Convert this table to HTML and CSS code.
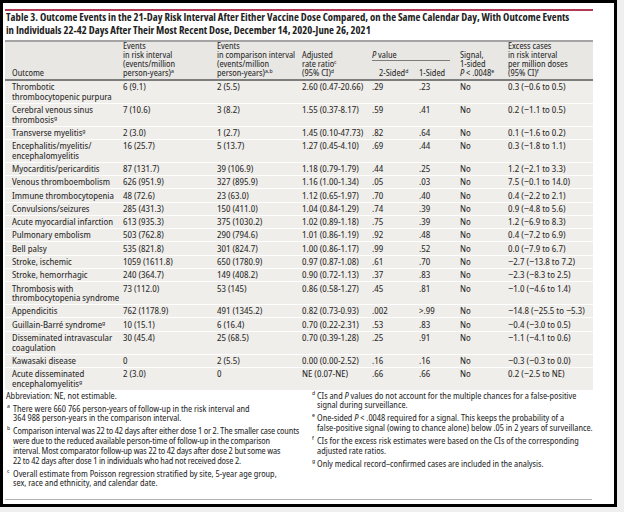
FILE: index.html
```html
<!DOCTYPE html>
<html lang="en">
<head>
<meta charset="utf-8">
<title>Table 3</title>
<link rel="stylesheet" href="styles.css">
</head>
<body>
<div class="frame">
  <div class="sheet">
    <div class="red-rule"></div>
    <h1 class="title">Table 3. Outcome Events in the 21-Day Risk Interval After Either Vaccine Dose Compared, on the Same Calendar Day, With Outcome Events<br>in Individuals 22-42 Days After Their Most Recent Dose, December 14, 2020-June 26, 2021</h1>
    <table class="data">
      <colgroup>
        <col class="c1"><col class="c2"><col class="c3"><col class="c4"><col class="c5"><col class="c6"><col class="c7"><col class="c8">
      </colgroup>
      <thead>
        <tr>
          <th rowspan="2">Outcome</th>
          <th rowspan="2">Events<br>in risk interval<br>(events/million<br>person-years)<sup>a</sup></th>
          <th rowspan="2">Events<br>in comparison interval<br>(events/million<br>person-years)<sup>a,b</sup></th>
          <th rowspan="2">Adjusted<br>rate ratio<sup>c</sup><br>(95% CI)<sup>d</sup></th>
          <th colspan="2" class="pv"><div class="pvl"><i>P</i> value</div></th>
          <th rowspan="2">Signal,<br>1-sided<br><i>P</i> &lt; .0048<sup>e</sup></th>
          <th rowspan="2">Excess cases<br>in risk interval<br>per million doses<br>(95% CI)<sup>f</sup></th>
        </tr>
        <tr>
          <th class="sub">2-Sided<sup>d</sup></th>
          <th class="sub">1-Sided</th>
        </tr>
      </thead>
      <tbody>
        <tr><td>Thrombotic<br>thrombocytopenic purpura</td><td>6 (9.1)</td><td>2 (5.5)</td><td>2.60 (0.47-20.66)</td><td>.29</td><td>.23</td><td>No</td><td>0.3 (−0.6 to 0.5)</td></tr>
        <tr><td>Cerebral venous sinus<br>thrombosis<sup>g</sup></td><td>7 (10.6)</td><td>3 (8.2)</td><td>1.55 (0.37-8.17)</td><td>.59</td><td>.41</td><td>No</td><td>0.2 (−1.1 to 0.5)</td></tr>
        <tr><td>Transverse myelitis<sup>g</sup></td><td>2 (3.0)</td><td>1 (2.7)</td><td>1.45 (0.10-47.73)</td><td>.82</td><td>.64</td><td>No</td><td>0.1 (−1.6 to 0.2)</td></tr>
        <tr><td>Encephalitis/myelitis/<br>encephalomyelitis</td><td>16 (25.7)</td><td>5 (13.7)</td><td>1.27 (0.45-4.10)</td><td>.69</td><td>.44</td><td>No</td><td>0.3 (−1.8 to 1.1)</td></tr>
        <tr><td>Myocarditis/pericarditis</td><td>87 (131.7)</td><td>39 (106.9)</td><td>1.18 (0.79-1.79)</td><td>.44</td><td>.25</td><td>No</td><td>1.2 (−2.1 to 3.3)</td></tr>
        <tr><td>Venous thromboembolism</td><td>626 (951.9)</td><td>327 (895.9)</td><td>1.16 (1.00-1.34)</td><td>.05</td><td>.03</td><td>No</td><td>7.5 (−0.1 to 14.0)</td></tr>
        <tr><td>Immune thrombocytopenia</td><td>48 (72.6)</td><td>23 (63.0)</td><td>1.12 (0.65-1.97)</td><td>.70</td><td>.40</td><td>No</td><td>0.4 (−2.2 to 2.1)</td></tr>
        <tr><td>Convulsions/seizures</td><td>285 (431.3)</td><td>150 (411.0)</td><td>1.04 (0.84-1.29)</td><td>.74</td><td>.39</td><td>No</td><td>0.9 (−4.8 to 5.6)</td></tr>
        <tr><td>Acute myocardial infarction</td><td>613 (935.3)</td><td>375 (1030.2)</td><td>1.02 (0.89-1.18)</td><td>.75</td><td>.39</td><td>No</td><td>1.2 (−6.9 to 8.3)</td></tr>
        <tr><td>Pulmonary embolism</td><td>503 (762.8)</td><td>290 (794.6)</td><td>1.01 (0.86-1.19)</td><td>.92</td><td>.48</td><td>No</td><td>0.4 (−7.2 to 6.9)</td></tr>
        <tr><td>Bell palsy</td><td>535 (821.8)</td><td>301 (824.7)</td><td>1.00 (0.86-1.17)</td><td>.99</td><td>.52</td><td>No</td><td>0.0 (−7.9 to 6.7)</td></tr>
        <tr><td>Stroke, ischemic</td><td>1059 (1611.8)</td><td>650 (1780.9)</td><td>0.97 (0.87-1.08)</td><td>.61</td><td>.70</td><td>No</td><td>−2.7 (−13.8 to 7.2)</td></tr>
        <tr><td>Stroke, hemorrhagic</td><td>240 (364.7)</td><td>149 (408.2)</td><td>0.90 (0.72-1.13)</td><td>.37</td><td>.83</td><td>No</td><td>−2.3 (−8.3 to 2.5)</td></tr>
        <tr><td>Thrombosis with<br>thrombocytopenia syndrome</td><td>73 (112.0)</td><td>53 (145)</td><td>0.86 (0.58-1.27)</td><td>.45</td><td>.81</td><td>No</td><td>−1.0 (−4.6 to 1.4)</td></tr>
        <tr><td>Appendicitis</td><td>762 (1178.9)</td><td>491 (1345.2)</td><td>0.82 (0.73-0.93)</td><td>.002</td><td>&gt;.99</td><td>No</td><td>−14.8 (−25.5 to −5.3)</td></tr>
        <tr><td>Guillain-Barré syndrome<sup>g</sup></td><td>10 (15.1)</td><td>6 (16.4)</td><td>0.70 (0.22-2.31)</td><td>.53</td><td>.83</td><td>No</td><td>−0.4 (−3.0 to 0.5)</td></tr>
        <tr><td>Disseminated intravascular<br>coagulation</td><td>30 (45.4)</td><td>25 (68.5)</td><td>0.70 (0.39-1.28)</td><td>.25</td><td>.91</td><td>No</td><td>−1.1 (−4.1 to 0.6)</td></tr>
        <tr><td>Kawasaki disease</td><td>0</td><td>2 (5.5)</td><td>0.00 (0.00-2.52)</td><td>.16</td><td>.16</td><td>No</td><td>−0.3 (−0.3 to 0.0)</td></tr>
        <tr><td>Acute disseminated<br>encephalomyelitis<sup>g</sup></td><td>2 (3.0)</td><td>0</td><td>NE (0.07-NE)</td><td>.66</td><td>.66</td><td>No</td><td>0.2 (−2.5 to NE)</td></tr>
      </tbody>
    </table>
    <div class="notes">
      <div class="col col-left">
        <p class="note plain">Abbreviation: NE, not estimable.</p>
        <p class="note"><sup class="m">a</sup><span>There were 660 766 person-years of follow-up in the risk interval and<br>364 988 person-years in the comparison interval.</span></p>
        <p class="note"><sup class="m">b</sup><span class="tight">Comparison interval was 22 to 42 days after either dose 1 or 2. The smaller case counts<br>were due to the reduced available person-time of follow-up in the comparison<br>interval. Most comparator follow-up was 22 to 42 days after dose 2 but some was<br>22 to 42 days after dose 1 in individuals who had not received dose 2.</span></p>
        <p class="note"><sup class="m">c</sup><span>Overall estimate from Poisson regression stratified by site, 5-year age group,<br>sex, race and ethnicity, and calendar date.</span></p>
      </div>
      <div class="col col-right">
        <p class="note"><sup class="m">d</sup><span>CIs and <i>P</i> values do not account for the multiple chances for a false-positive<br>signal during surveillance.</span></p>
        <p class="note"><sup class="m">e</sup><span>One-sided <i>P</i> &lt; .0048 required for a signal. This keeps the probability of a<br>false-positive signal (owing to chance alone) below .05 in 2 years of surveillance.</span></p>
        <p class="note"><sup class="m">f</sup><span>CIs for the excess risk estimates were based on the CIs of the corresponding<br>adjusted rate ratios.</span></p>
        <p class="note"><sup class="m">g</sup><span>Only medical record–confirmed cases are included in the analysis.</span></p>
      </div>
    </div>
    <div class="end-rule"></div>
  </div>
</div>
</body>
</html>
```
FILE: styles.css
```css
html, body {
  margin: 0;
  padding: 0;
  background: #efefef;
}

.frame {
  width: 611px;
  height: 501px;
  border: 3px solid #000;
  background: #fff;
  font-family: "Noto Sans Display", "Noto Sans", sans-serif;
  font-stretch: condensed;
  color: #292929;
}

.sheet {
  box-sizing: border-box;
  height: 100%;
  padding: 6px 0 4px 2px;
  display: flex;
  flex-direction: column;
}

.red-rule {
  width: 588px;
  height: 2px;
  background: #b23a55;
  flex: none;
}

.title {
  margin: 0 0 2px;
  padding-left: 1px;
  font-family: "Open Sans", "Noto Sans", sans-serif;
  font-size: 10.7px;
  line-height: 13.3px;
  font-weight: 700;
  font-stretch: condensed;
  color: #222;
  white-space: nowrap;
}

.data {
  width: 588px;
  table-layout: fixed;
  border-collapse: separate;
  border-spacing: 0;
  flex: none;
}

.c1 { width: 118px; }
.c2 { width: 94px; }
.c3 { width: 85px; }
.c4 { width: 70px; }
.c5 { width: 47px; }
.c6 { width: 41px; }
.c7 { width: 48px; }
.c8 { width: 85px; }

.data th,
.data td {
  padding: 0;
  text-align: left;
  white-space: nowrap;
}

.data th:first-child,
.data td:first-child {
  padding-left: 7px;
}

.data thead th {
  font-weight: 400;
  font-size: 8.6px;
  line-height: 9.3px;
  vertical-align: bottom;
  background: #e8e7e4;
  color: #262626;
  border-top: 2px solid #a4a4a4;
  border-bottom: 2px solid #7d7d7d;
}

.data thead th.pv {
  border-bottom: 0;
}

.data thead th.sub {
  border-top: 0;
}

.pvl {
  width: 78px;
  margin: 9.3px 0 8.3px;
  border-bottom: 1px solid #7d7d7d;
}

.data tbody td {
  font-size: 9.1px;
  line-height: 9.6px;
  padding-top: 1.35px;
  padding-bottom: 1.35px;
  vertical-align: top;
  background: #f0eeea;
  border-top: 1px solid #fff;
}

.data tbody tr:first-child td {
  border-top: 0;
}

.data sup {
  font-size: 6px;
  line-height: 0;
  vertical-align: 3px;
}

.notes {
  display: grid;
  grid-template-columns: 306px 282px;
  margin-top: 1px;
  font-size: 8.5px;
  line-height: 9.7px;
  color: #262626;
  flex: none;
}

.note {
  margin: 0 0 3.3px;
  display: flex;
  white-space: nowrap;
}

.note.plain {
  padding-left: 1px;
}

.note .m {
  flex: none;
  line-height: 9.7px;
  font-size: 6px;
  position: relative;
  top: -2px;
}

.col-left .note .m {
  width: 8px;
  padding-left: 2px;
  box-sizing: border-box;
}

.col-right .note .m {
  width: 6px;
  padding-left: 1px;
  box-sizing: border-box;
}

.tight {
  letter-spacing: -0.15px;
}

.end-rule {
  margin-top: auto;
  width: 587px;
  height: 1px;
  background: #b4b4b4;
  flex: none;
}
```
